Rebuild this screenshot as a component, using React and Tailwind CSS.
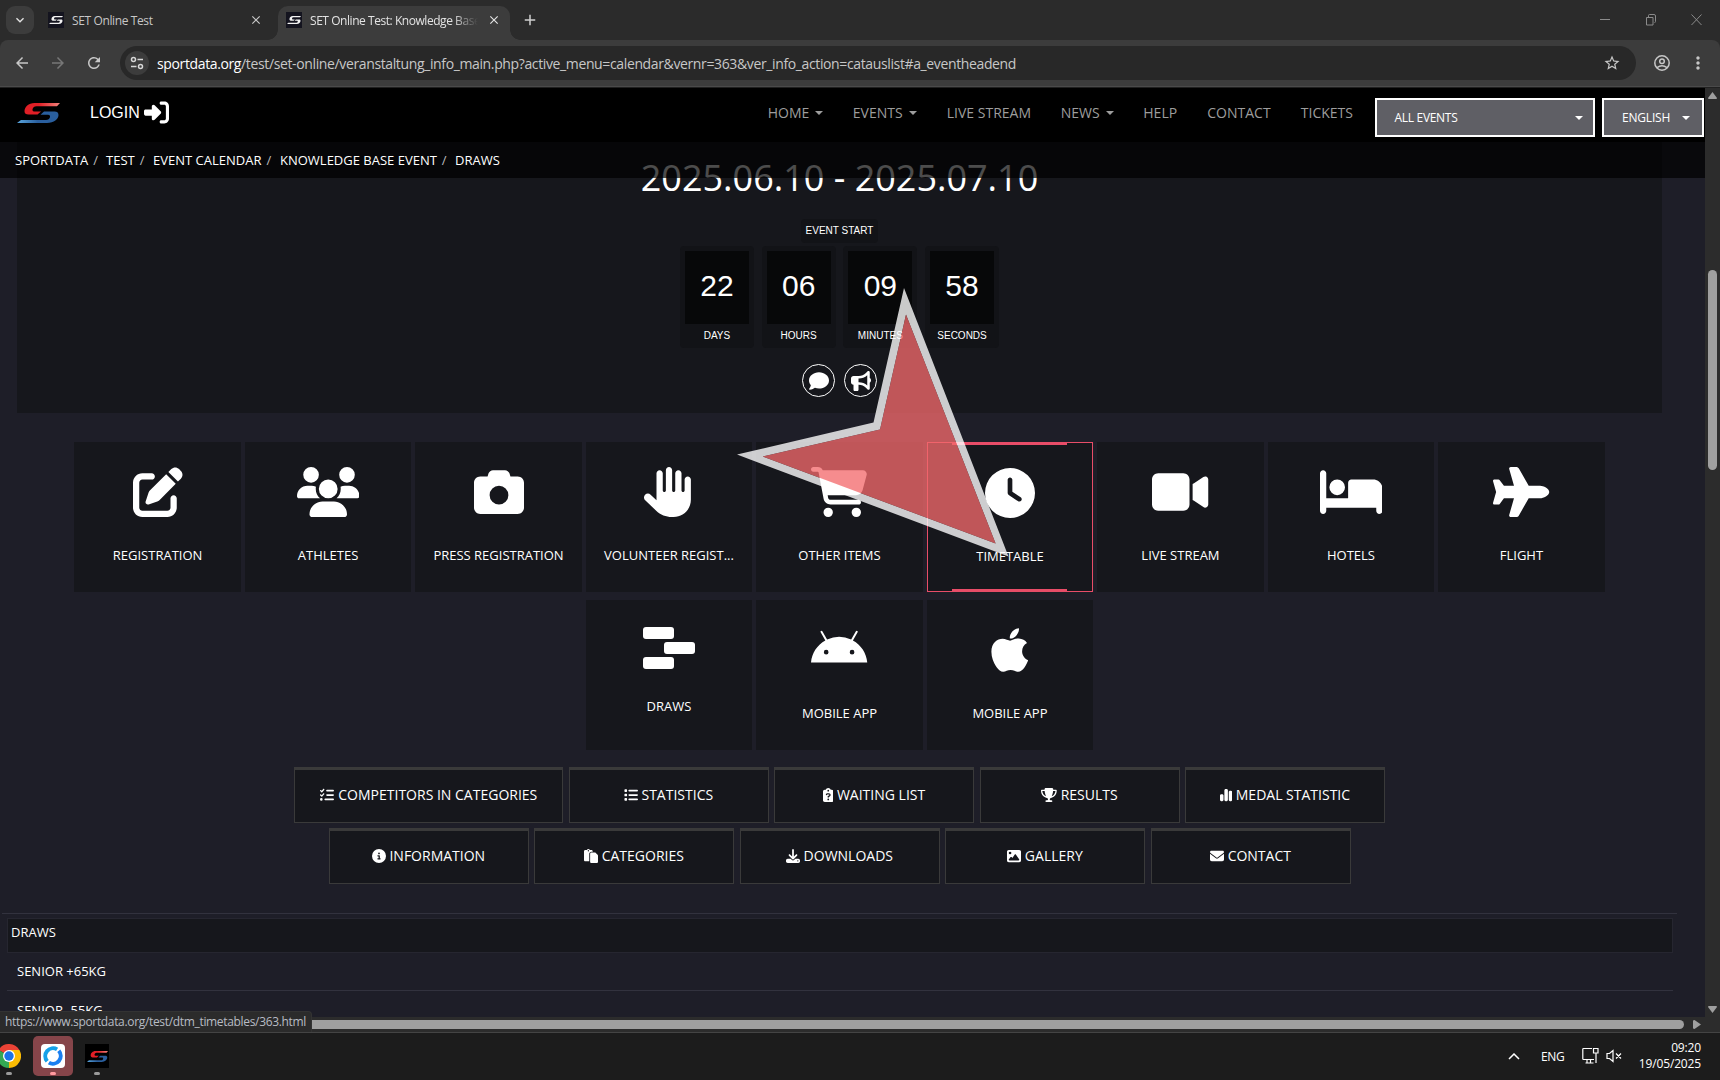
import React from 'react';
import {
  FaApple, FaAndroid, FaBed, FaBullhorn, FaCamera, FaCartShopping, FaChartSimple, FaCircleInfo,
  FaClipboardQuestion, FaClock, FaComment, FaDownload, FaEnvelope, FaHand, FaImage, FaList,
  FaListCheck, FaPaste, FaPenToSquare, FaPlane, FaRightToBracket, FaTrophy, FaUsers, FaVideo,
} from 'react-icons/fa6';
import {
  MdArrowBack, MdArrowForward, MdRefresh, MdStarOutline, MdMoreVert, MdClose, MdAdd, MdKeyboardArrowDown,
} from 'react-icons/md';

const navItems = [
  { label: 'HOME', caret: true, width: 'w-[85px]' },
  { label: 'EVENTS', caret: true, width: 'w-[94px]' },
  { label: 'LIVE STREAM', width: 'w-[114px]' },
  { label: 'NEWS', caret: true, width: 'w-[82.5px]' },
  { label: 'HELP', width: 'w-[64px]' },
  { label: 'CONTACT', width: 'w-[93.5px]' },
  { label: 'TICKETS', width: 'w-[74px]' },
];

const crumbs = [
  { label: 'SPORTDATA', width: 'w-[91px]' },
  { label: 'TEST', width: 'w-[47px]' },
  { label: 'EVENT CALENDAR', width: 'w-[127px]' },
  { label: 'KNOWLEDGE BASE EVENT', width: 'w-[175px]' },
  { label: 'DRAWS', width: 'w-[60px]' },
];

const countdown = [
  { value: '22', label: 'DAYS' },
  { value: '06', label: 'HOURS' },
  { value: '09', label: 'MINUTES' },
  { value: '58', label: 'SECONDS' },
];

const tilesTop = [
  { label: 'REGISTRATION', icon: FaPenToSquare, size: 'w-[50px]' },
  { label: 'ATHLETES', icon: FaUsers, size: 'w-[62.5px]' },
  { label: 'PRESS REGISTRATION', icon: FaCamera, size: 'w-[50px]' },
  { label: 'VOLUNTEER REGIST...', icon: FaHand, size: 'w-[50px]' },
  { label: 'OTHER ITEMS', icon: FaCartShopping, size: 'w-[56.25px]' },
  { label: 'TIMETABLE', icon: FaClock, size: 'w-[50px]', active: true },
  { label: 'LIVE STREAM', icon: FaVideo, size: 'w-[56.25px]' },
  { label: 'HOTELS', icon: FaBed, size: 'w-[62.5px]' },
  { label: 'FLIGHT', icon: FaPlane, size: 'w-[56.25px]' },
];

const tilesBottom = [
  { label: 'DRAWS', icon: DrawsIcon, draws: true },
  { label: 'MOBILE APP', icon: FaAndroid, size: 'w-[56.25px]' },
  { label: 'MOBILE APP', icon: FaApple, size: 'w-[37.5px]' },
];

const buttonsTop = [
  { label: 'COMPETITORS IN CATEGORIES', icon: FaListCheck, size: 'w-[14px] mr-[1px]', wide: true },
  { label: 'STATISTICS', icon: FaList, size: 'w-[14px]' },
  { label: 'WAITING LIST', icon: FaClipboardQuestion, size: 'w-[10.5px]' },
  { label: 'RESULTS', icon: FaTrophy, size: 'w-[15.75px]' },
  { label: 'MEDAL STATISTIC', icon: FaChartSimple, size: 'w-[12.25px]' },
];

const buttonsBottom = [
  { label: 'INFORMATION', icon: FaCircleInfo, size: 'w-[14px]' },
  { label: 'CATEGORIES', icon: FaPaste, size: 'w-[14px]' },
  { label: 'DOWNLOADS', icon: FaDownload, size: 'w-[14px]' },
  { label: 'GALLERY', icon: FaImage, size: 'w-[14px]' },
  { label: 'CONTACT', icon: FaEnvelope, size: 'w-[14px]' },
];

function DrawsIcon() {
  return (
    <svg width="52" height="42" viewBox="0 0 52 42" fill="currentColor">
      <rect x="0" y="0" width="31" height="12" rx="3" />
      <rect x="21" y="15" width="31" height="12" rx="3" />
      <rect x="0" y="30" width="31" height="12" rx="3" />
    </svg>
  );
}

function Logo({ className, mono }) {
  return (
    <svg className={className} viewBox="0 0 43 20" preserveAspectRatio="none">
      <defs>
        <linearGradient id="logoRed" x1="0" x2="1">
          <stop offset="0.4" stopColor="#e01f26" />
          <stop offset="1" stopColor="#f4837c" />
        </linearGradient>
        <linearGradient id="logoBlue" x1="0" x2="1">
          <stop offset="0" stopColor="#5aa5dc" />
          <stop offset="0.5" stopColor="#2a5f9e" />
        </linearGradient>
      </defs>
      <path
        fill={mono ? '#f2f2f2' : 'url(#logoRed)'}
        d="M43 0H17.500C11.500 0 7.500 4 7.500 8.300C7.500 10.500 9 11.600 11.500 11.600H20.500L24 8.500H17C14.500 8.500 15 3.200 19.500 3.200H40Z"
      />
      <path
        fill={mono ? '#f2f2f2' : 'url(#logoBlue)'}
        d="M0 20H30C37 20 41.500 16 41.500 12C41.500 9.700 40 8.600 37.500 8.600H27L23.500 11.800H31C34.500 11.800 33.500 17 29 17H4Z"
      />
    </svg>
  );
}

function Favicon() {
  return (
    <span className="w-4 h-4 shrink-0 bg-[#14141f] flex items-center justify-center">
      <Logo mono className="w-[14px] h-[8px]" />
    </span>
  );
}

function Caret() {
  return <span className="w-0 h-0 border-x-4 border-x-transparent border-t-4 border-t-current" />;
}

function TabStrip() {
  return (
    <div className="h-10 bg-[#2b2b2b] flex items-end text-[#c7c7c7]">
      <div className="self-start mt-1.5 ml-1.5 w-7 h-7 rounded-[9px] bg-[#3c3c3c] flex items-center justify-center text-[#e3e3e3]">
        <MdKeyboardArrowDown size={16} />
      </div>
      <div className="h-[34px] w-[244px] pl-[14px] pb-1.5 flex items-center">
        <Favicon />
        <span className="ml-2 mt-0.5 text-[12px] whitespace-nowrap tracking-[-0.38px] grow">SET Online Test</span>
        <MdClose size={14} className="mr-[15px]" />
      </div>
      <div className="relative h-[34px] w-[232px] pl-2 pb-1.5 rounded-t-[10px] bg-[#3c3c3c] flex items-center text-[#e3e3e3]">
        <span className="absolute -left-2.5 bottom-0 w-2.5 h-2.5 bg-[radial-gradient(circle_at_0_0,#2b2b2b_9.5px,#3c3c3c_10px)]" />
        <span className="absolute -right-2.5 bottom-0 w-2.5 h-2.5 bg-[radial-gradient(circle_at_100%_0,#2b2b2b_9.5px,#3c3c3c_10px)]" />
        <Favicon />
        <span className="ml-2 mt-0.5 w-[168px] overflow-hidden text-[12px] whitespace-nowrap tracking-[-0.45px] [mask-image:linear-gradient(to_right,#000_85%,transparent_100%)]">
          SET Online Test: Knowledge Base Event
        </span>
        <MdClose size={14} className="ml-[9px]" />
      </div>
      <MdAdd size={18} className="ml-[11px] mb-[11px] text-[#d0d0d0]" />
      <div className="ml-auto mr-[18px] mb-[14px] flex items-center text-[#8b8b8b]">
        <svg width="102" height="12" viewBox="0 0 102 12" fill="none" stroke="currentColor">
          <path d="M0 5.5h10M91.500 .5l10 10.500M101.500 .5L91.500 11" />
          <path d="M46.500 3.500h6.500v7.500h-6.500zM48.500 3v-1.500q0-1 1-1h4.500q1.500 0 1.500 1.500v5.500q0 1-1 1" />
        </svg>
      </div>
    </div>
  );
}

function AddressBar() {
  return (
    <div className="bg-[#2b2b2b]">
      <div className="h-[47px] bg-[#3c3c3c] rounded-t-[8px] flex items-center pl-[13px] text-[#c7c7c7] border-b border-[#4a4a4a]">
        <MdArrowBack size={18} />
        <MdArrowForward size={18} className="ml-[18px] text-[#777]" />
        <MdRefresh size={18} className="ml-[18px]" />
        <div className="ml-[17px] w-[1516px] h-[34px] rounded-full bg-[#282828] flex items-center">
          <span className="ml-[5px] w-6 h-6 rounded-full bg-[#3c3c3c] flex items-center justify-center">
            <svg width="14" height="14" viewBox="0 0 14 14" fill="none" stroke="#d6d6d6" strokeWidth="1.500">
              <circle cx="3.500" cy="3.500" r="2" />
              <path d="M7.500 3.500H13M1 10.500h5.500" />
              <circle cx="10.500" cy="10.500" r="2" />
            </svg>
          </span>
          <span className="ml-2 text-[14px] whitespace-nowrap tracking-[-0.37px] grow">
            <span className="text-white">sportdata.org</span>
            /test/set-online/veranstaltung_info_main.php?active_menu=calendar&amp;vernr=363&amp;ver_info_action=catauslist#a_eventheadend
          </span>
          <MdStarOutline size={18} className="mr-[15px]" />
        </div>
        <svg width="16" height="16" viewBox="0 0 16 16" fill="none" stroke="currentColor" strokeWidth="1.500" className="ml-[18px]">
          <circle cx="8" cy="8" r="7.200" />
          <circle cx="8" cy="6.200" r="2.300" />
          <path d="M3 12.700q5-3.700 10 0" />
        </svg>
        <MdMoreVert size={20} className="ml-[18px]" />
      </div>
      <div className="h-px bg-[#202020]" />
    </div>
  );
}

function SiteHeader() {
  return (
    <header className="absolute inset-x-0 top-0 z-10">
      <div className="h-[54px] bg-black flex items-start">
        <Logo className="w-[43px] h-5 mt-[15px] ml-[17px]" />
        <a className="ml-[30px] mt-[12px] flex items-center font-['Liberation_Sans',sans-serif] text-[16px] leading-6 text-white">
          LOGIN
          <FaRightToBracket size={25} className="ml-1" />
        </a>
        <nav className="ml-[599px] mt-[15px] flex text-[14px] leading-5 text-[#9d9d9d] whitespace-nowrap">
          {navItems.map((item) => (
            <a key={item.label} className={`${item.width} flex items-center gap-1.5`}>
              {item.label}
              {item.caret && <Caret />}
            </a>
          ))}
        </nav>
        <div className="ml-auto mr-px mt-[10px] flex gap-[7px] text-[12px] text-white">
          <div className="w-[220px] h-[39px] border-2 border-white bg-[#5f5f65] flex items-center justify-between pl-[17.5px] pr-[10px]">
            <span className="tracking-[-0.3px]">ALL EVENTS</span>
            <Caret />
          </div>
          <div className="w-[102px] h-[39px] border-2 border-white bg-[#5f5f65] flex items-center justify-between pl-[18px] pr-[12px]">
            <span className="tracking-[-0.2px]">ENGLISH</span>
            <Caret />
          </div>
        </div>
      </div>
      <div className="h-9 bg-black/70 flex items-center pt-0.5 pl-[15px] text-[13px] text-white whitespace-nowrap">
        {crumbs.map((c, i) => (
          <span key={c.label} className={`${c.width} flex`}>
            {c.label}
            {i < crumbs.length - 1 && <span className="ml-[5px] text-[#bbb]">/</span>}
          </span>
        ))}
      </div>
    </header>
  );
}

function Hero() {
  return (
    <section className="ml-[17px] w-[1645px] h-[325px] bg-[#16171c] flex flex-col items-center text-white">
      <h2 className="mt-[70px] text-[36px] leading-10">2025.06.10 - 2025.07.10</h2>
      <div className="mt-[21px] w-[77px] h-6 rounded bg-[#121317] text-center font-['Liberation_Sans',sans-serif] text-[10px] leading-[23px] whitespace-nowrap">
        EVENT START
      </div>
      <div className="mt-[3px] flex gap-[7.7px] font-['Liberation_Sans',sans-serif]">
        {countdown.map((c) => (
          <div key={c.label} className="w-[74px] h-[102px] rounded bg-[#121317] p-[5px] text-center">
            <div className="h-[73px] bg-[#070809] text-[30px] leading-[70px]">{c.value}</div>
            <div className="text-[10px] leading-[23px]">{c.label}</div>
          </div>
        ))}
      </div>
      <div className="mt-4 flex gap-[9px]">
        <span className="w-[33px] h-[33px] rounded-full border border-white flex items-center justify-center">
          <FaComment size={20} />
        </span>
        <span className="w-[33px] h-[33px] rounded-full border border-white flex items-center justify-center">
          <FaBullhorn size={20} />
        </span>
      </div>
    </section>
  );
}

function Tile({ label, icon: Icon, size, active, draws }) {
  return (
    <a
      className={`relative w-[166.8px] h-[150px] bg-[#16171c] flex flex-col items-center text-white ${
        active ? 'border border-[#e84d68]' : ''
      } ${draws ? 'pt-[27px]' : 'pt-[25px]'}`}
    >
      {active && (
        <>
          <span className="absolute -top-px left-[24px] w-[115px] h-[3px] bg-[#e84d68]" />
          <span className="absolute -bottom-px left-[24px] w-[115px] h-[3px] bg-[#e84d68]" />
        </>
      )}
      {draws ? <Icon /> : <Icon className={`h-[50px] ${size}`} />}
      <span className={`text-[13px] leading-5 whitespace-nowrap ${draws ? 'mt-[27px]' : 'mt-7'}`}>{label}</span>
    </a>
  );
}

function MenuButton({ label, icon: Icon, size, wide }) {
  return (
    <a
      className={`h-14 bg-[#16171c] border border-t-[3px] border-[#3a3a3a] flex items-center justify-center gap-[3.6px] pb-[3px] text-[14px] text-white whitespace-nowrap ${
        wide ? 'w-[269px]' : 'w-[200px]'
      }`}
    >
      <Icon className={`h-[14px] shrink-0 ${size}`} />
      {label}
    </a>
  );
}

function Pointer() {
  return (
    <svg className="absolute left-[737px] top-[287px] z-20" width="272" height="270" viewBox="737 287 272 270">
      <path
        fill="#fff"
        fillOpacity="0.790"
        fillRule="evenodd"
        d="M904 288L1008.500 556.500L737 454.500L873.500 422.500ZM906 314.500L880 429.500L762.700 456.500L995.600 543.500Z"
      />
      <path fill="#f36a6c" fillOpacity="0.770" d="M906 314.500L880 429.500L762.700 456.500L995.600 543.500Z" />
    </svg>
  );
}

function VerticalScrollbar() {
  return (
    <div className="w-[15px] bg-[#2c2c2c] flex flex-col items-center text-[#9f9f9f]">
      <svg width="9" height="7" viewBox="0 0 9 7" fill="currentColor" className="mt-1">
        <path d="M4.500 0L9 6Q9 7 8 7H1Q0 7 0 6Z" />
      </svg>
      <div className="mt-[171px] w-[9px] h-[200px] rounded-full bg-[#9f9f9f]" />
      <svg width="9" height="7" viewBox="0 0 9 7" fill="currentColor" className="mt-auto mb-[19px]">
        <path d="M4.500 7L9 1Q9 0 8 0H1Q0 0 0 1Z" />
      </svg>
    </div>
  );
}

function Taskbar() {
  return (
    <div className="h-12 bg-[#1c1c1c] border-t border-[#444] flex items-start text-white text-[12px]">
      <div className="w-[21px] h-full overflow-hidden flex flex-col items-start">
        <svg width="24" height="24" viewBox="0 0 24 24" className="mt-[11px] -ml-[3px] shrink-0">
          <path fill="#ea4335" d="M12 12L1.600 6A12 12 0 0 1 22.400 6Z" />
          <path fill="#fbbc04" d="M12 12L22.400 6A12 12 0 0 1 12 24Z" />
          <path fill="#34a853" d="M12 12L12 24A12 12 0 0 1 1.600 6Z" />
          <path fill="#fbbc04" d="M12 6H22.400L17.200 15L12 24Z" />
          <circle cx="12" cy="12" r="6" fill="#fff" />
          <circle cx="12" cy="12" r="4.700" fill="#1a73e8" />
        </svg>
        <span className="mt-1 ml-1.5 w-1.5 h-[3px] rounded-full bg-[#9a9a9a]" />
      </div>
      <div className="ml-3 mt-[3px] w-10 h-10 rounded-[5px] bg-[#86454a] flex flex-col items-center pt-2">
        <div className="w-6 h-6 rounded bg-white flex items-center justify-center">
          <svg width="20" height="20" viewBox="0 0 20 20" fill="none" strokeWidth="4">
            <path stroke="#16a0e8" d="M4.200 15.200A7.800 7.800 0 0 1 14.100 3.400" />
            <path stroke="#1a7ff0" d="M15.800 4.800A7.800 7.800 0 0 1 5.900 16.600" />
          </svg>
        </div>
        <span className="mt-1 w-1.5 h-[3px] rounded-full bg-[#ff9a9f]" />
      </div>
      <div className="ml-3 mt-[11px] flex flex-col items-center">
        <div className="w-6 h-6 bg-black flex items-center justify-center">
          <Logo className="w-[21px] h-[11px]" />
        </div>
        <span className="mt-1 w-1.5 h-[3px] rounded-full bg-[#9a9a9a]" />
      </div>
      <div className="ml-auto mr-[19px] flex items-start">
        <svg width="12" height="7" viewBox="0 0 12 7" fill="none" stroke="currentColor" strokeWidth="1.500" className="mt-5">
          <path d="M1 6l5-5 5 5" />
        </svg>
        <span className="ml-[21px] mt-[14px] w-[23px] leading-5 tracking-[-0.4px]">ENG</span>
        <svg width="17" height="18" viewBox="0 0 17 18" fill="none" stroke="currentColor" strokeWidth="1.200" className="ml-[18px] mt-[14px]">
          <path d="M10 1.500H1.500q-.7 0-.7.700v9.600q0 .7.700.7H12M5 12.500v3M8.500 12.500v3M3.500 16h8M11.500 1.500h4.500v4.500h-4.500zM14 6v10" />
        </svg>
        <svg width="17" height="14" viewBox="0 0 17 14" fill="none" stroke="currentColor" strokeWidth="1.200" className="ml-[7px] mt-4">
          <path d="M1 4.500h2.500L7 1.500v11L3.500 9.500H1zM10 4.500l5 5M15 4.500l-5 5" />
        </svg>
        <div className="w-[78px] mt-[7px] text-right leading-4 tracking-[-0.150px]">
          <div>09:20</div>
          <div>19/05/2025</div>
        </div>
      </div>
    </div>
  );
}

export default function App() {
  return (
    <div className="w-[1720px] h-[1080px] overflow-hidden flex flex-col bg-[#1e1e28] font-['Open_Sans',sans-serif]">
      <TabStrip />
      <AddressBar />

      <div className="relative h-[944px] flex">
        <div className="w-[1705px] flex flex-col">
          <div className="relative grow min-h-0 overflow-hidden">
            <SiteHeader />
            <Hero />
            <div className="mt-[29px] ml-[74px] w-[1531px] flex flex-col items-center gap-2">
              <div className="flex gap-[3.700px]">
                {tilesTop.map((t) => <Tile key={t.label} {...t} />)}
              </div>
              <div className="flex gap-[3.700px]">
                {tilesBottom.map((t, i) => <Tile key={i} {...t} />)}
              </div>
            </div>
            <div className="mt-[17px] ml-[74px] w-[1531px] flex flex-col items-center gap-[5px]">
              <div className="flex gap-[5.500px]">
                {buttonsTop.map((b) => <MenuButton key={b.label} {...b} />)}
              </div>
              <div className="flex gap-[5.500px]">
                {buttonsBottom.map((b) => <MenuButton key={b.label} {...b} />)}
              </div>
            </div>
            <div className="mt-[29px] ml-[2px] w-[1675px] border-t border-[#32323e]" />
            <div className="mt-1 ml-[7px] w-[1666px] text-[13px] leading-5 text-white">
              <div className="h-[35px] bg-[#16171c] border border-[#262630] pl-[3px] pt-[3px]">DRAWS</div>
              <div className="h-[38px] border-b border-[#32323e] pl-2.5 pt-2">SENIOR +65KG</div>
              <div className="pl-2.5 pt-[9px]">SENIOR -55KG</div>
            </div>
          </div>
          <div className="h-[15px] shrink-0 bg-[#2c2c2c] flex items-center text-[#9f9f9f]">
            <div className="ml-4 w-[1668px] h-[9px] rounded-full bg-[#9f9f9f]" />
            <svg width="8" height="9" viewBox="0 0 8 9" fill="currentColor" className="ml-[9px]">
              <path d="M8 4.500L1.500 9Q0 9 0 8V1Q0 0 1.500 0Z" />
            </svg>
          </div>
        </div>
        <VerticalScrollbar />

        {/* link preview shown while hovering the timetable tile */}
        <div className="absolute left-0 bottom-0 w-[312px] h-[21px] rounded-tr bg-[#2b2b2b] border-t border-r border-[#333] pl-[5px] text-[12px] leading-5 tracking-[-0.33px] text-[#b8bcc4] whitespace-nowrap">
          https://www.sportdata.org/test/dtm_timetables/363.html
        </div>
      </div>

      <Taskbar />
      <Pointer />
    </div>
  );
}
